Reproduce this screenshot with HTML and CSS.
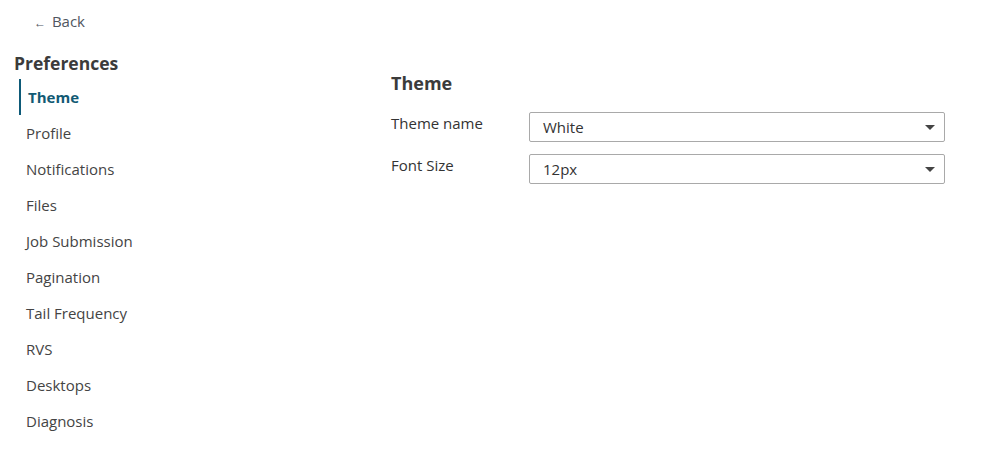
FILE: index.html
```html
<!DOCTYPE html>
<html lang="en">
<head>
  <meta charset="UTF-8">
  <title>Preferences</title>
  <link rel="stylesheet" href="styles.css">
</head>
<body>
  <div class="page">
    <a class="back" href="#"><span class="arrow">&larr;</span> Back</a>
    <div class="layout">
      <div class="sidebar">
        <h2 class="sidebar-title">Preferences</h2>
        <ul class="nav">
          <li class="active">Theme</li>
          <li>Profile</li>
          <li>Notifications</li>
          <li>Files</li>
          <li>Job Submission</li>
          <li>Pagination</li>
          <li>Tail Frequency</li>
          <li>RVS</li>
          <li>Desktops</li>
          <li>Diagnosis</li>
        </ul>
      </div>
      <div class="content">
        <h3 class="section-title">Theme</h3>
        <div class="field">
          <label>Theme name</label>
          <div class="select"><span>White</span><span class="caret"></span></div>
        </div>
        <div class="field">
          <label>Font Size</label>
          <div class="select"><span>12px</span><span class="caret"></span></div>
        </div>
      </div>
    </div>
  </div>
</body>
</html>
```

FILE: styles.css
```css
body {
  margin: 0;
  font-family: "Open Sans", sans-serif;
  color: #444;
  background: #fff;
}

.page {
  padding: 10px 0 0 14px;
}

.back {
  display: inline-block;
  margin-left: 20px;
  font-size: 15px;
  color: #4f5660;
  text-decoration: none;
  line-height: 20px;
}

.back .arrow {
  font-size: 12px;
  margin-right: 2px;
}

.layout {
  display: flex;
  margin-top: 19px;
}

.sidebar {
  width: 377px;
}

.sidebar-title {
  margin: 0;
  font-size: 17.5px;
  font-weight: 700;
  line-height: 22px;
  color: #3b3b3b;
}

.nav {
  list-style: none;
  margin: 5px 0 0 5px;
  padding: 0;
}

.nav li {
  height: 36px;
  line-height: 36px;
  padding-left: 7px;
  font-size: 15px;
  color: #444;
}

.nav li.active {
  border-left: 2px solid #0e5a78;
  font-weight: 700;
  color: #125a74;
}

.content {
  padding-top: 19px;
  width: 554px;
}

.section-title {
  margin: 0 0 17px;
  font-size: 18px;
  font-weight: 700;
  line-height: 24px;
  color: #3b3b3b;
}

.field {
  display: flex;
  align-items: flex-start;
  margin-bottom: 12px;
}

.field label {
  width: 138px;
  margin-top: 1px;
  font-size: 15px;
  line-height: 20px;
  color: #333;
}

.select {
  flex: 1;
  display: flex;
  justify-content: space-between;
  align-items: center;
  height: 30px;
  box-sizing: border-box;
  padding: 0 9px 0 13px;
  border: 1px solid #a9a9a9;
  border-radius: 2px;
  font-size: 15px;
  color: #333;
}

.caret {
  width: 0;
  height: 0;
  border-left: 5px solid transparent;
  border-right: 5px solid transparent;
  border-top: 5px solid #444;
}
```
